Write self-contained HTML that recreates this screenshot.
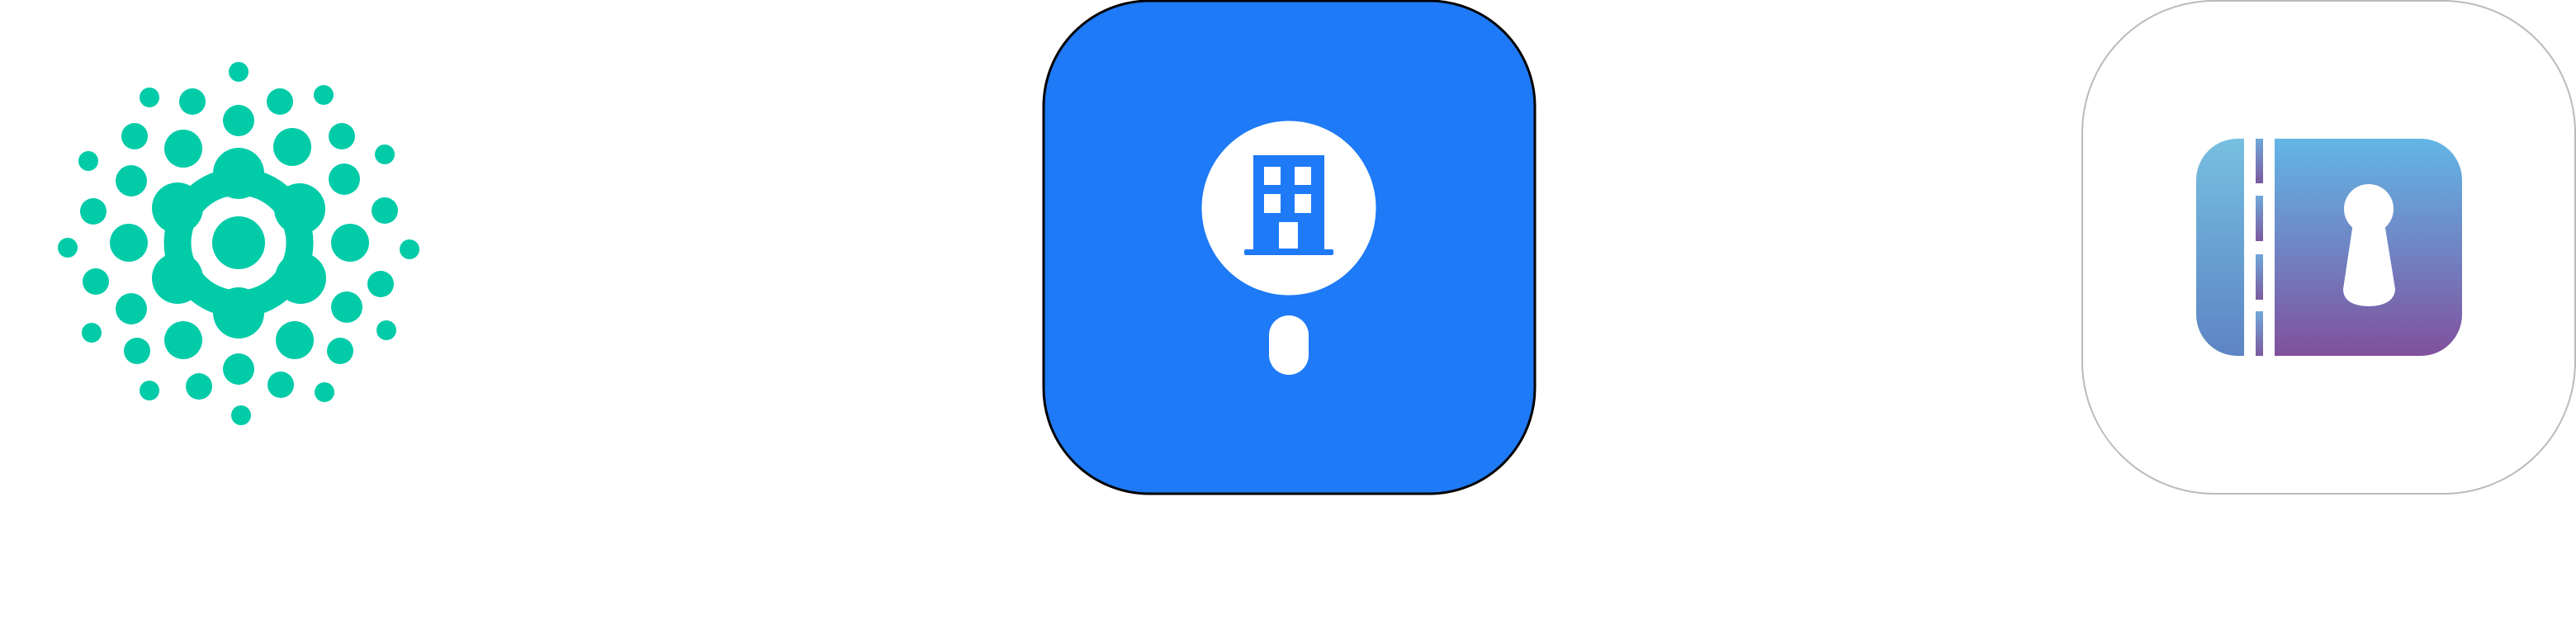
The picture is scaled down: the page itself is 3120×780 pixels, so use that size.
<!DOCTYPE html>
<html><head><meta charset="utf-8"><style>
html,body{margin:0;padding:0;background:#fff;width:3120px;height:780px;overflow:hidden}
svg{position:absolute;left:0;top:0}
</style></head><body>
<svg width="3120" height="780" viewBox="0 0 3120 780" xmlns="http://www.w3.org/2000/svg">
<defs>
<linearGradient id="gR" x1="0" y1="0" x2="0" y2="1"><stop offset="0" stop-color="#62b6e6"/><stop offset="0.55" stop-color="#7180c0"/><stop offset="1" stop-color="#80509c"/></linearGradient>
<linearGradient id="gL" x1="0" y1="0" x2="0" y2="1"><stop offset="0" stop-color="#76bfe0"/><stop offset="1" stop-color="#5d84c4"/></linearGradient>
<linearGradient id="gD" x1="0" y1="0" x2="0" y2="1"><stop offset="0" stop-color="#6fa8da"/><stop offset="1" stop-color="#7b5a9e"/></linearGradient>
</defs>
<g fill="#02cba8">
<circle cx="289" cy="87" r="12"/><circle cx="181" cy="118" r="12"/><circle cx="233" cy="123" r="16"/><circle cx="339" cy="123" r="16"/><circle cx="392" cy="115" r="12"/>
<circle cx="289" cy="146" r="19"/><circle cx="163" cy="165" r="16"/><circle cx="222" cy="180" r="23"/><circle cx="354" cy="178" r="23"/><circle cx="414" cy="165" r="16"/>
<circle cx="107" cy="195" r="12"/><circle cx="466" cy="187" r="12"/><circle cx="159" cy="219" r="19"/><circle cx="417" cy="217" r="19"/>
<circle cx="113" cy="256" r="16"/><circle cx="466" cy="255" r="16"/><circle cx="156" cy="294" r="23"/><circle cx="424" cy="294" r="23"/>
<circle cx="82" cy="300" r="12"/><circle cx="496" cy="302" r="12"/><circle cx="289" cy="294" r="32"/>
<circle cx="116" cy="341" r="16"/><circle cx="461" cy="344" r="16"/><circle cx="159" cy="374" r="19"/><circle cx="420" cy="372" r="19"/>
<circle cx="111" cy="403" r="12"/><circle cx="468" cy="400" r="12"/><circle cx="166" cy="425" r="16"/><circle cx="222" cy="412" r="23"/><circle cx="357" cy="412" r="23"/><circle cx="412" cy="425" r="16"/>
<circle cx="289" cy="447" r="19"/><circle cx="181" cy="473" r="12"/><circle cx="241" cy="468" r="16"/><circle cx="340" cy="466" r="16"/><circle cx="393" cy="475" r="12"/><circle cx="292" cy="503" r="12"/>
<circle cx="289" cy="210" r="31"/><circle cx="215" cy="252" r="31"/><circle cx="363" cy="253" r="31"/><circle cx="215" cy="337" r="31"/><circle cx="364" cy="337" r="31"/><circle cx="289" cy="379" r="31"/>
<circle cx="289" cy="226" r="12"/><circle cx="230" cy="260" r="12"/><circle cx="348" cy="260" r="12"/><circle cx="230" cy="328" r="12"/><circle cx="348" cy="328" r="12"/><circle cx="289" cy="362" r="12"/>
</g>
<circle cx="289" cy="294" r="74" fill="none" stroke="#02cba8" stroke-width="33"/>
<rect x="1264" y="1" width="595" height="597" rx="128" fill="#1e7af6" stroke="#000" stroke-width="3"/>
<circle cx="1561" cy="252" r="105.5" fill="#fff"/>
<rect x="1518" y="188" width="86" height="116" fill="#1e7af6"/>
<rect x="1507" y="302" width="108" height="7" rx="2" fill="#1e7af6"/>
<g fill="#fff">
<rect x="1531" y="202" width="20" height="22"/><rect x="1568" y="202" width="20" height="22"/>
<rect x="1531" y="235" width="20" height="23"/><rect x="1568" y="235" width="20" height="23"/>
<rect x="1549" y="269" width="23" height="32"/>
<rect x="1537" y="382" width="48" height="72" rx="24"/>
</g>
<rect x="2522" y="1" width="597" height="597" rx="160" fill="#fff" stroke="#bbb" stroke-width="2"/>
<path d="M2718 168 V431 H2710 A50 50 0 0 1 2660 381 V218 A50 50 0 0 1 2710 168 Z" fill="url(#gL)"/>
<g fill="url(#gD)">
<rect x="2732" y="168" width="9" height="54"/><rect x="2732" y="237" width="9" height="55"/><rect x="2732" y="308" width="9" height="55"/><rect x="2732" y="377" width="9" height="54"/>
</g>
<path d="M2755 168 H2932 A50 50 0 0 1 2982 218 V381 A50 50 0 0 1 2932 431 H2755 Z" fill="url(#gR)"/>
<circle cx="2869" cy="253" r="30" fill="#fff"/>
<path d="M2850 270 H2888 L2901 350 Q2900 370 2869 371 Q2838 370 2838 350 Z" fill="#fff"/>
</svg>
</body></html>
